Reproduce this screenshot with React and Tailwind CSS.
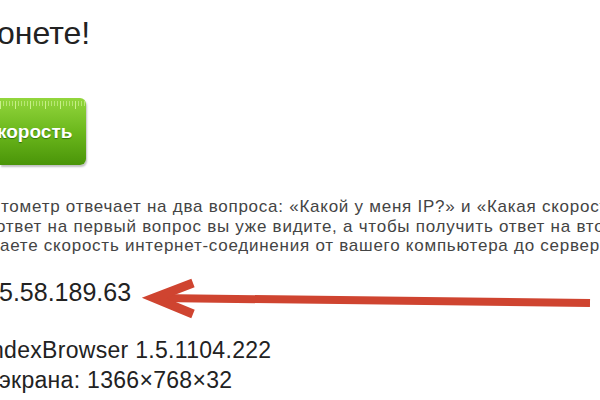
export default function App() {
  const ticks = Array.from({ length: 30 }, (_, i) => i);
  return (
    <div
      className="relative w-[600px] h-[400px] overflow-hidden bg-white text-[#222]"
      style={{ fontFamily: '"Liberation Sans", Arial, sans-serif' }}
    >
      <div className="flex flex-col">
        <div className="mt-[13px] ml-[-3px] h-[40px] text-[32px] leading-[40px] whitespace-nowrap">
          онете!
        </div>
        <div className="mt-[45px] relative w-[86px] h-[67px] rounded-r-[6px] bg-gradient-to-b from-[#93d63c] via-[#6cb81c] to-[#4a9508] shadow-[1px_2px_2px_rgba(0,0,0,0.25)] overflow-hidden">
          <div className="absolute left-0 top-[3px] flex gap-[2px] h-[8px] items-start">
            {ticks.map((i) => (
              <div
                key={i}
                className={
                  i % 5 === 0
                    ? "w-[1px] h-[8px] bg-[#c9f08a]"
                    : "w-[1px] h-[5px] bg-[#b8e676]"
                }
              />
            ))}
          </div>
          <div className="absolute left-[-3px] top-[23px] text-white font-bold text-[19px] leading-[22px] whitespace-nowrap [text-shadow:0_1px_1px_rgba(0,60,0,0.5)]">
            корость
          </div>
        </div>
        <div className="mt-[32px] text-[17px] leading-[19.5px] text-[#444] tracking-[0.75px] whitespace-nowrap">
          <div className="ml-[1px]">тометр отвечает на два вопроса: «Какой у меня IP?» и «Какая скорость</div>
          <div className="ml-[-4px]">ответ на первый вопрос вы уже видите, а чтобы получить ответ на второй</div>
          <div className="ml-[0px]">аете скорость интернет-соединения от вашего компьютера до сервера</div>
        </div>
        <div className="mt-[21px] ml-[-1px] text-[25px] leading-[30px] whitespace-nowrap text-[#222]">
          5.58.189.63
        </div>
        <div className="mt-[29px] ml-[-9px] text-[23px] leading-[28px] tracking-[0.3px] whitespace-nowrap text-[#222]">
          ndexBrowser 1.5.1104.222
        </div>
        <div className="mt-[2px] ml-[-1px] text-[23px] leading-[28px] tracking-[0.3px] whitespace-nowrap text-[#222]">
          экрана: 1366×768×32
        </div>
      </div>
      <svg
        className="absolute left-0 top-0"
        width="600"
        height="400"
        viewBox="0 0 600 400"
      >
        <path
          d="M158 298 L590 303"
          stroke="#cf4430"
          strokeWidth="8"
          fill="none"
        />
        <path
          d="M193 283 L154 298 L193 314"
          stroke="#cf4430"
          strokeWidth="9"
          fill="none"
          strokeLinejoin="miter"
          strokeMiterlimit="10"
        />
      </svg>
    </div>
  );
}
